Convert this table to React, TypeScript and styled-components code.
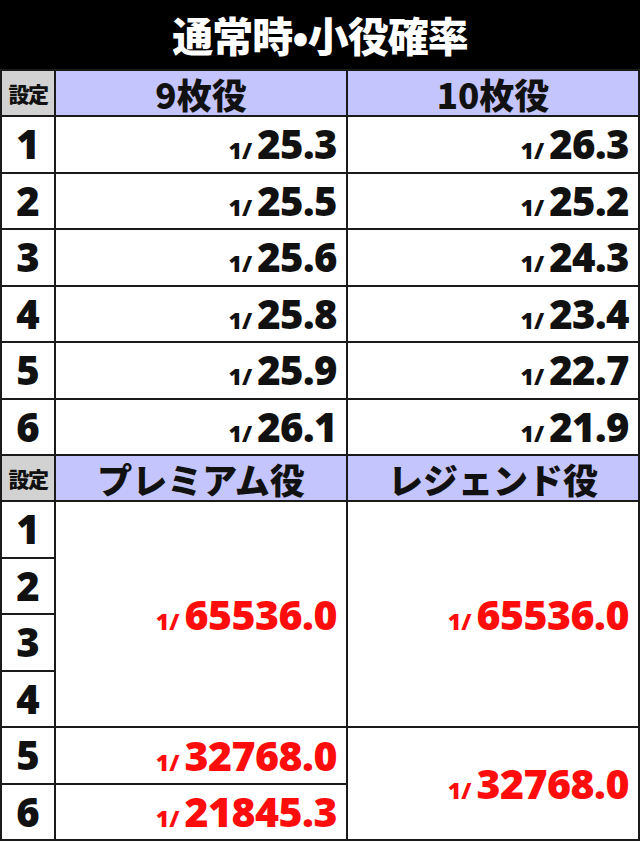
import styled, { createGlobalStyle } from "styled-components";

const GlobalStyle = createGlobalStyle`
  body {
    margin: 0;
    background: #fff;
  }
`;

const normal = [
  { set: 1, nine: "25.3", ten: "26.3" },
  { set: 2, nine: "25.5", ten: "25.2" },
  { set: 3, nine: "25.6", ten: "24.3" },
  { set: 4, nine: "25.8", ten: "23.4" },
  { set: 5, nine: "25.9", ten: "22.7" },
  { set: 6, nine: "26.1", ten: "21.9" },
];

function Prob({ value, red }: { value: string; red?: boolean }) {
  return (
    <ProbText $red={red}>
      <Small>1/</Small>
      <Big $red={red}>{value}</Big>
    </ProbText>
  );
}

export default function App() {
  return (
    <Page>
      <GlobalStyle />
      <Title>通常時•小役確率</Title>
      <Table>
        <colgroup>
          <col style={{ width: 54 }} />
          <col />
          <col />
        </colgroup>
        <tbody>
          <HeadRow>
            <SetHead>設定</SetHead>
            <HeadCell>9枚役</HeadCell>
            <HeadCell>10枚役</HeadCell>
          </HeadRow>
          {normal.map((row) => (
            <Row key={row.set}>
              <NumCell>{row.set}</NumCell>
              <ValueCell>
                <Prob value={row.nine} />
              </ValueCell>
              <ValueCell>
                <Prob value={row.ten} />
              </ValueCell>
            </Row>
          ))}
          <HeadRow>
            <SetHead>設定</SetHead>
            <HeadCell>プレミアム役</HeadCell>
            <HeadCell>レジェンド役</HeadCell>
          </HeadRow>
          <Row>
            <NumCell>1</NumCell>
            <ValueCell rowSpan={4}>
              <Prob value="65536.0" red />
            </ValueCell>
            <ValueCell rowSpan={4}>
              <Prob value="65536.0" red />
            </ValueCell>
          </Row>
          <Row>
            <NumCell>2</NumCell>
          </Row>
          <Row>
            <NumCell>3</NumCell>
          </Row>
          <Row>
            <NumCell>4</NumCell>
          </Row>
          <Row>
            <NumCell>5</NumCell>
            <ValueCell>
              <Prob value="32768.0" red />
            </ValueCell>
            <ValueCell rowSpan={2}>
              <Prob value="32768.0" red />
            </ValueCell>
          </Row>
          <Row>
            <NumCell>6</NumCell>
            <ValueCell>
              <Prob value="21845.3" red />
            </ValueCell>
          </Row>
        </tbody>
      </Table>
    </Page>
  );
}

const Page = styled.div`
  width: 640px;
  background: #fff;
`;

const Title = styled.div`
  height: 69px;
  background: #000;
  color: #fff;
  display: flex;
  align-items: center;
  justify-content: center;
  font-family: "Noto Sans CJK JP", sans-serif;
  font-weight: 900;
  font-size: 41px;
  letter-spacing: -1px;
  padding-bottom: 2px;
  box-sizing: border-box;
`;

const Table = styled.table`
  width: 640px;
  border-collapse: collapse;
  table-layout: fixed;
  border: 2px solid #1a1a1a;
`;

const HeadRow = styled.tr`
  height: 46px;
`;

const Row = styled.tr`
  height: 56.5px;
`;

const Cell = styled.td`
  border: 2px solid #1a1a1a;
  padding: 0;
  line-height: 1;
`;

const SetHead = styled(Cell)`
  background: #d2d2d2;
  text-align: center;
  font-family: "Noto Sans CJK JP", sans-serif;
  font-weight: 900;
  font-size: 21px;
  letter-spacing: -1.5px;
  color: #111;
`;

const HeadCell = styled(Cell)`
  background: #c5c5fd;
  text-align: center;
  font-family: "Noto Sans CJK JP", sans-serif;
  font-weight: 900;
  font-size: 35px;
  color: #111;
`;

const NumCell = styled(Cell)`
  text-align: center;
  font-family: "Open Sans", "Noto Sans", sans-serif;
  font-weight: 800;
  font-stretch: 88%;
  font-size: 40px;
  color: #111;
`;

const ValueCell = styled(Cell)`
  text-align: right;
  padding-right: 9px;
  vertical-align: middle;
`;

const ProbText = styled.span<{ $red?: boolean }>`
  font-family: "Open Sans", "Noto Sans", sans-serif;
  font-weight: 800;
  font-stretch: 88%;
  color: ${(p) => (p.$red ? "#ff0d0d" : "#111")};
  white-space: nowrap;
`;

const Small = styled.span`
  font-size: 23px;
  margin-right: 5px;
`;

const Big = styled.span<{ $red?: boolean }>`
  font-size: ${(p) => (p.$red ? "41px" : "40px")};
  letter-spacing: -0.5px;
`;
